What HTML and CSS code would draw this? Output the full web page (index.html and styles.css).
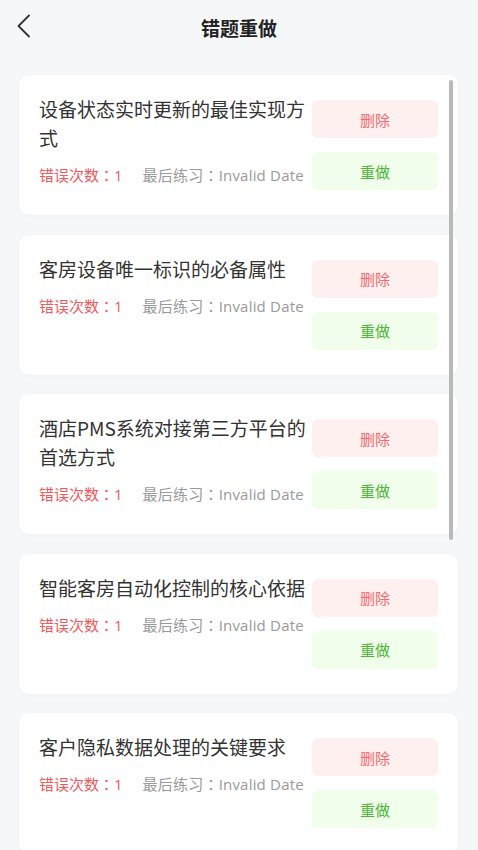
FILE: index.html
```html
<!DOCTYPE html>
<html lang="zh-CN">
<head>
<meta charset="utf-8">
<title>错题重做</title>
<link rel="stylesheet" href="styles.css">
</head>
<body>
<div class="page">
  <header class="nav">
    <button class="back" aria-label="返回">
      <svg width="16" height="24" viewBox="0 0 16 24"><path d="M13 1.5 L2.5 12 L13 22.5" fill="none" stroke="#333" stroke-width="1.8" stroke-linecap="round" stroke-linejoin="round"/></svg>
    </button>
    <h1 class="nav-title">错题重做</h1>
  </header>

  <main class="list">
    <div class="card">
      <div class="info">
        <div class="q-title">设备状态实时更新的最佳实现方式</div>
        <div class="meta"><span class="count">错误次数<span class="colon" lang="ja">：</span>1</span><span class="last">最后练习<span class="colon" lang="ja">：</span>Invalid Date</span></div>
      </div>
      <div class="actions">
        <button class="btn btn-del">删除</button>
        <button class="btn btn-redo">重做</button>
      </div>
    </div>

    <div class="card">
      <div class="info">
        <div class="q-title">客房设备唯一标识的必备属性</div>
        <div class="meta"><span class="count">错误次数<span class="colon" lang="ja">：</span>1</span><span class="last">最后练习<span class="colon" lang="ja">：</span>Invalid Date</span></div>
      </div>
      <div class="actions">
        <button class="btn btn-del">删除</button>
        <button class="btn btn-redo">重做</button>
      </div>
    </div>

    <div class="card">
      <div class="info">
        <div class="q-title">酒店PMS系统对接第三方平台的首选方式</div>
        <div class="meta"><span class="count">错误次数<span class="colon" lang="ja">：</span>1</span><span class="last">最后练习<span class="colon" lang="ja">：</span>Invalid Date</span></div>
      </div>
      <div class="actions">
        <button class="btn btn-del">删除</button>
        <button class="btn btn-redo">重做</button>
      </div>
    </div>

    <div class="card">
      <div class="info">
        <div class="q-title">智能客房自动化控制的核心依据</div>
        <div class="meta"><span class="count">错误次数<span class="colon" lang="ja">：</span>1</span><span class="last">最后练习<span class="colon" lang="ja">：</span>Invalid Date</span></div>
      </div>
      <div class="actions">
        <button class="btn btn-del">删除</button>
        <button class="btn btn-redo">重做</button>
      </div>
    </div>

    <div class="card">
      <div class="info">
        <div class="q-title">客户隐私数据处理的关键要求</div>
        <div class="meta"><span class="count">错误次数<span class="colon" lang="ja">：</span>1</span><span class="last">最后练习<span class="colon" lang="ja">：</span>Invalid Date</span></div>
      </div>
      <div class="actions">
        <button class="btn btn-del">删除</button>
        <button class="btn btn-redo">重做</button>
      </div>
    </div>
  </main>

  <div class="scroll-thumb"></div>
</div>
</body>
</html>
```

FILE: styles.css
```css
* { box-sizing: border-box; }

html, body {
  margin: 0;
  padding: 0;
  background: #f6f7f9;
}

body {
  font-family: "Noto Sans CJK SC", "Noto Sans", sans-serif;
  color: #333;
}

.page {
  position: relative;
  width: 478px;
  height: 850px;
  overflow: hidden;
}

/* top navigation bar */
.nav {
  position: relative;
  height: 56px;
  display: flex;
  align-items: center;
  justify-content: center;
}

.back {
  position: absolute;
  left: 16px;
  top: 14px;
  padding: 0;
  border: 0;
  background: none;
  display: flex;
}

.nav-title {
  margin: 0;
  font-size: 19px;
  font-weight: 700;
  line-height: 26px;
  color: #222;
}

/* question cards */
.list {
  padding: 19px 20px 0 19px;
  display: flex;
  flex-direction: column;
  gap: 19.5px;
}

.card {
  background: #fff;
  border-radius: 10px;
  height: 140px;
  padding: 19px 20px 0 20px;
  display: flex;
  gap: 4px;
  box-shadow: 0 1px 4px rgba(0, 0, 0, 0.03);
}

.info {
  flex: 1;
  min-width: 0;
}

.q-title {
  font-size: 19px;
  line-height: 29px;
  color: #333;
}

.meta {
  margin-top: 12px;
  font-size: 15px;
  line-height: 22px;
  display: flex;
  gap: 20px;
  white-space: nowrap;
  font-family: "Open Sans", "Noto Sans CJK SC", sans-serif;
}

/* centred full-width colon */
.colon {
  font-family: "Noto Sans CJK JP", sans-serif;
}

.count { color: #f0595c; }
.last { color: #9a9a9a; letter-spacing: 0.2px; }

.actions {
  width: 126px;
  padding-top: 6px;
  display: flex;
  flex-direction: column;
  gap: 14px;
}

.btn {
  height: 38px;
  border: 0;
  border-radius: 6px;
  font-family: inherit;
  font-size: 15px;
  padding: 0;
}

.btn-del {
  background: #fff0f0;
  color: #f26b6e;
}

.btn-redo {
  background: #f2feec;
  color: #4db537;
}

/* scroll indicator overlaid on the list */
.scroll-thumb {
  position: absolute;
  left: 449px;
  top: 80px;
  width: 3.5px;
  height: 460px;
  background: #b9b9b9;
  border-radius: 2px;
}
```
